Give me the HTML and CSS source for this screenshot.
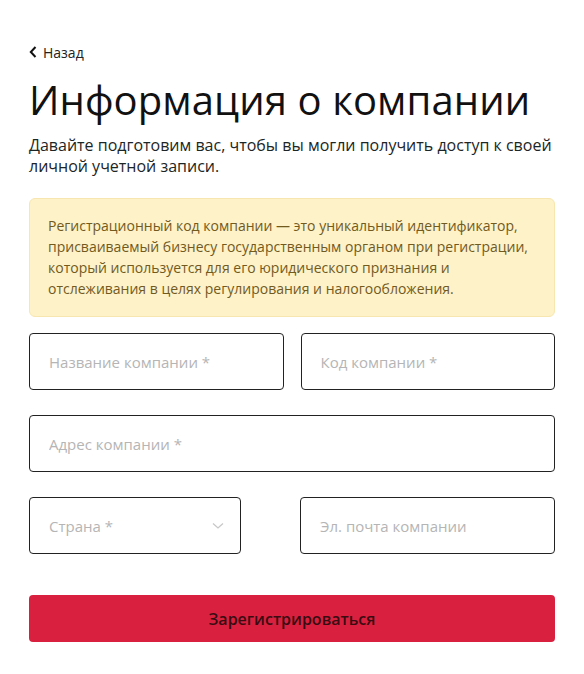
FILE: index.html
```html
<!DOCTYPE html>
<html lang="ru">
<head>
  <meta charset="UTF-8" />
  <meta name="viewport" content="width=device-width, initial-scale=1" />
  <title>Информация о компании</title>
  <link rel="stylesheet" href="styles.css">
</head>
<body>
  <div class="page">
    <a href="#" class="back">
      <svg width="8" height="12" viewBox="0 0 8 12"><path d="M6.5 1 L1.8 6 L6.5 11" fill="none" stroke="#111" stroke-width="2"/></svg>
      Назад
    </a>

    <h1>Информация о компании</h1>
    <p class="lead">Давайте подготовим вас, чтобы вы могли получить доступ к своей личной учетной записи.</p>

    <div class="notice">
      Регистрационный код компании — это уникальный идентификатор, присваиваемый бизнесу государственным органом при регистрации, который используется для его юридического признания и отслеживания в целях регулирования и налогообложения.
    </div>

    <form>
      <div class="row">
        <input type="text" placeholder="Название компании *">
        <input type="text" placeholder="Код компании *">
      </div>
      <div class="row">
        <input type="text" class="wide" placeholder="Адрес компании *">
      </div>
      <div class="row">
        <div class="select">
          <span>Страна *</span>
          <svg width="12" height="8" viewBox="0 0 12 8"><path d="M1 1.5 L6 6 L11 1.5" fill="none" stroke="#c8c8c8" stroke-width="1.3"/></svg>
        </div>
        <input type="email" placeholder="Эл. почта компании">
      </div>
      <button type="submit">Зарегистрироваться</button>
    </form>
  </div>
</body>
</html>
```

FILE: styles.css
```css
* {
  box-sizing: border-box;
}

body {
  margin: 0;
  font-family: 'Open Sans', 'Noto Sans', sans-serif;
  background: #fff;
  color: #111;
}

.page {
  padding: 41px 29px 30px;
}

.back {
  display: inline-flex;
  align-items: center;
  gap: 6px;
  color: #222;
  text-decoration: none;
  font-size: 14px;
}

h1 {
  margin: 10px 0 0;
  font-size: 40px;
  font-weight: 400;
  line-height: 54px;
  letter-spacing: 0.1px;
}

.lead {
  margin: 8px 0 0;
  font-size: 16px;
  line-height: 21px;
  color: #1c2626;
}

.notice {
  margin-top: 21px;
  padding: 16px 18px 17px;
  background: #fdf2c8;
  border: 1px solid #f8e6b0;
  border-radius: 6px;
  color: #725a1e;
  font-size: 14px;
  line-height: 21px;
}

form {
  margin-top: 16px;
}

.row {
  display: flex;
  gap: 17px;
  margin-bottom: 25px;
}

input, .select {
  flex: 1;
  height: 57px;
  padding: 0 19px;
  border: 1px solid #222;
  border-radius: 4px;
  font-family: inherit;
  font-size: 15px;
  color: #222;
  background: #fff;
}

input::placeholder {
  color: #b5b5b5;
}

.select {
  flex: 0 0 212px;
  margin-right: 42px;
  display: flex;
  align-items: center;
  justify-content: space-between;
  color: #b5b5b5;
  padding-right: 16px;
}

button {
  width: 100%;
  height: 47px;
  margin-top: 16px;
  border: none;
  border-radius: 4px;
  background: #d9213f;
  color: #3a0c12;
  font-family: inherit;
  font-size: 16px;
  font-weight: 600;
  cursor: pointer;
}
```
